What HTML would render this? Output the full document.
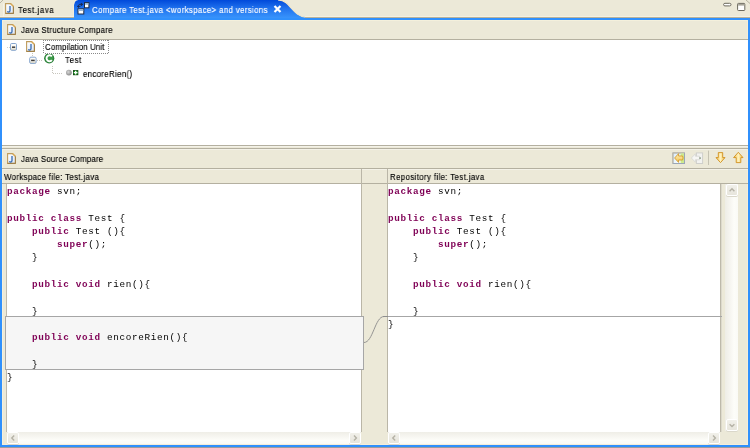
<!DOCTYPE html>
<html><head><meta charset="utf-8">
<style>
*{margin:0;padding:0;box-sizing:border-box}
html,body{width:750px;height:448px;overflow:hidden;background:#ECE9D8}
body{position:relative;-webkit-font-smoothing:antialiased;font-family:"Liberation Sans",sans-serif;font-size:8.6px;color:#000}
.a{position:absolute}
.t{position:absolute;white-space:pre;line-height:10px;will-change:transform;transform-origin:0 0;-webkit-text-stroke:0.15px currentColor}
.code{position:absolute;will-change:transform;font-family:"Liberation Mono",monospace;font-size:9.3px;letter-spacing:0.67px;line-height:13.28px;white-space:pre;color:#000}
.k{color:#7F0055;font-weight:bold}
.sb{position:absolute;width:12px;height:12px;background:linear-gradient(180deg,#F1F0EA,#E7E5DC);border:1px solid #FFFFFF;border-radius:2px;box-shadow:0 1px 0 #DAD7CA}
</style></head><body>

<!-- tab bar -->
<svg class="a" style="left:0;top:0" width="750" height="20">
  <defs>
    <linearGradient id="jf" x1="0" y1="0" x2="1" y2="1">
      <stop offset="0" stop-color="#FFFFFF"/><stop offset="1" stop-color="#DCE8FA"/>
    </linearGradient>
    <linearGradient id="tg" x1="0" y1="0" x2="0" y2="1">
      <stop offset="0" stop-color="#0049DA"/>
      <stop offset="0.45" stop-color="#2173EE"/>
      <stop offset="1" stop-color="#3A97FD"/>
    </linearGradient>
  </defs>
  <line x1="0" y1="3" x2="3" y2="0" stroke="#B8B4A2" stroke-width="1"/>
  <path d="M74,19 L74,5 Q74.5,0 78.5,0 L278,0 C285,0.5 288,4 291,8 C295,12.5 299,16.8 306,17.2 L306,19 Z" fill="url(#tg)"/>
  <path d="M278,0 C285,0.5 288,4 291,8 C295,12.5 299,16.8 306,17.2 L750,17.2" fill="none" stroke="#F2E6C8" stroke-width="1.1"/>
  <path d="M73.5,17 L73.5,5 Q74,0 78,-0.5" fill="none" stroke="#F4EEDB" stroke-width="1"/>
  <line x1="0" y1="17.5" x2="74" y2="17.5" stroke="#B9B29A" stroke-width="1"/><line x1="0" y1="16.5" x2="74" y2="16.5" stroke="#F4F1E2" stroke-width="1"/>
  <line x1="305" y1="17.5" x2="750" y2="17.5" stroke="#B9B29A" stroke-width="1"/><line x1="305" y1="16.5" x2="750" y2="16.5" stroke="#F4F1E2" stroke-width="1"/>
  <!-- min / max -->
  <rect x="723.6" y="3.3" width="7.4" height="2.6" rx="1.3" fill="#fff" stroke="#6B685C" stroke-width="1"/>
  <rect x="737.6" y="3.4" width="7.2" height="7.1" rx="0.8" fill="#fff" stroke="#6B685C" stroke-width="1"/>
  <rect x="738.1" y="3.9" width="6.2" height="1.7" fill="#A9A69A"/>
  <path d="M3.5,17 V3.5" fill="none" stroke="#F6F3E6" stroke-width="1"/>
  <line x1="746" y1="0" x2="750" y2="3.5" stroke="#B8B4A2" stroke-width="1"/>
</svg>
<!-- tab icons -->
<svg class="a" style="left:4.5px;top:3px" width="9" height="11" viewBox="0 0 9 11">
  <path d="M0.6,0.6 H5.6 L8.4,3.4 V10.4 H0.6 Z" fill="url(#jf)" stroke="#BE9B5C" stroke-width="1.1"/>
  <path d="M0.6,10.4 H8.4 V3.4" fill="none" stroke="#9C7E48" stroke-width="1"/>
  <path d="M5.6,0.6 L8.4,3.4" stroke="#D9A850" stroke-width="1.3"/>
  <path d="M5,2.9 V7.6 Q5,9.1 3.6,9.1 Q2.8,9.1 2.4,8.3" fill="none" stroke="#3C6FB4" stroke-width="1.35"/>
</svg>
<div class="t" style="left:17.9px;top:4.5px;font-size:9.4px;transform:scaleX(0.84);letter-spacing:0.69px">Test.java</div>

<svg class="a" style="left:77px;top:2px" width="13" height="13" viewBox="0 0 13 13">
  <rect x="7.5" y="0.6" width="4.4" height="5.2" fill="#FFFFFF" stroke="#1E2A44" stroke-width="1"/>
  <rect x="8" y="1.1" width="3.4" height="1.6" fill="#8FB0D0"/>
  <rect x="1" y="6.8" width="5.8" height="5.2" fill="#FFFFFF" stroke="#1E2A44" stroke-width="1"/>
  <rect x="1.5" y="7.3" width="4.8" height="1.6" fill="#8FB0D0"/>
  <path d="M1.8,2.4 H5 M4.2,1.2 L5.8,2.4 L4.2,3.6 Z" fill="#1A2A55" stroke="#1A2A55" stroke-width="0.9"/>
  <path d="M3.4,4.4 H0.8 M1.6,3.4 L0.3,4.4 L1.6,5.4 Z" fill="#1A2A55" stroke="#1A2A55" stroke-width="0.9"/>
</svg>
<div class="t" style="left:92.2px;top:4.5px;font-size:9.4px;transform:scaleX(0.84);letter-spacing:0.41px;color:#fff">Compare Test.java &lt;workspace&gt; and versions</div>
<svg class="a" style="left:273px;top:5px" width="9" height="8" viewBox="0 0 9 8">
  <path d="M1.5,1 L7.5,7 M7.5,1 L1.5,7" stroke="#fff" stroke-width="2.2"/>
</svg>

<!-- blue frame -->
<div class="a" style="left:0;top:18px;width:750px;height:429px;border:2px solid #3090FC"></div>
<div class="a" style="left:2px;top:20px;width:746px;height:1px;background:#F4F0DC"></div>
<div class="a" style="left:2px;top:20px;width:1px;height:425px;background:#F4F0DC"></div>
<div class="a" style="left:747px;top:20px;width:1px;height:425px;background:#F4EEDA"></div>
<div class="a" style="left:2px;top:444px;width:746px;height:1px;background:#F4EEDA"></div>
<div class="a" style="left:0;top:447px;width:750px;height:1px;background:#9C9C9C"></div>

<!-- structure header -->
<div class="a" style="left:2px;top:39px;width:746px;height:1px;background:#B4B0A0"></div>
<svg class="a" style="left:7px;top:24px" width="9" height="11" viewBox="0 0 9 11">
  <path d="M0.6,0.6 H5.6 L8.4,3.4 V10.4 H0.6 Z" fill="url(#jf)" stroke="#BE9B5C" stroke-width="1.1"/>
  <path d="M0.6,10.4 H8.4 V3.4" fill="none" stroke="#9C7E48" stroke-width="1"/>
  <path d="M5.6,0.6 L8.4,3.4" stroke="#D9A850" stroke-width="1.3"/>
  <path d="M5,2.9 V7.6 Q5,9.1 3.6,9.1 Q2.8,9.1 2.4,8.3" fill="none" stroke="#3C6FB4" stroke-width="1.35"/>
</svg>
<div class="t" style="left:20.9px;top:25px;font-size:9.4px;transform:scaleX(0.84);letter-spacing:0.35px">Java Structure Compare</div>

<!-- tree white area -->
<div class="a" style="left:2px;top:40px;width:746px;height:105px;background:#fff"></div>
<div class="a" style="left:2px;top:145px;width:746px;height:1px;background:#B4B0A0"></div>
<div class="a" style="left:2px;top:148px;width:746px;height:1px;background:#B4B0A0"></div>
<div class="a" style="left:2px;top:146px;width:746px;height:1px;background:#F4F2E8"></div>
<div class="a" style="left:2px;top:149px;width:746px;height:1px;background:#F4F2E8"></div>
<div class="a" style="left:2px;top:169px;width:746px;height:1px;background:#F4F2E8"></div>

<!-- tree contents -->
<svg class="a" style="left:26px;top:41px" width="9" height="11" viewBox="0 0 9 11">
  <path d="M0.6,0.6 H5.6 L8.4,3.4 V10.4 H0.6 Z" fill="url(#jf)" stroke="#BE9B5C" stroke-width="1.1"/>
  <path d="M0.6,10.4 H8.4 V3.4" fill="none" stroke="#9C7E48" stroke-width="1"/>
  <path d="M5.6,0.6 L8.4,3.4" stroke="#D9A850" stroke-width="1.3"/>
  <path d="M5,2.9 V7.6 Q5,9.1 3.6,9.1 Q2.8,9.1 2.4,8.3" fill="none" stroke="#3C6FB4" stroke-width="1.35"/>
</svg>
<svg class="a" style="left:0;top:40px" width="140" height="40">
  <defs>
    <linearGradient id="ex" x1="0" y1="0" x2="0" y2="1">
      <stop offset="0" stop-color="#FFFFFF"/><stop offset="0.5" stop-color="#F8F6F0"/><stop offset="1" stop-color="#DCD5C0"/>
    </linearGradient>
    <radialGradient id="sph" cx="0.4" cy="0.4" r="0.6">
      <stop offset="0" stop-color="#D8D8D8"/><stop offset="1" stop-color="#8A8A8A"/>
    </radialGradient>
  </defs>
  <!-- dotted lines -->
  <line x1="7" y1="7.5" x2="10" y2="7.5" stroke="#D2D0C8" stroke-dasharray="1,1"/>
  <line x1="32.5" y1="13" x2="32.5" y2="17" stroke="#C8C6BE" stroke-dasharray="1,1"/>
  <line x1="37" y1="20.5" x2="43" y2="20.5" stroke="#C8C6BE" stroke-dasharray="1,1"/>
  <line x1="52.5" y1="26" x2="52.5" y2="34" stroke="#C8C6BE" stroke-dasharray="1,1"/>
  <line x1="53" y1="33.5" x2="62" y2="33.5" stroke="#C8C6BE" stroke-dasharray="1,1"/>
  <!-- expander 1 -->
  <rect x="10.5" y="3.5" width="6" height="6.8" rx="1.2" fill="url(#ex)" stroke="#86A6CF" stroke-width="1"/>
  <line x1="12" y1="7.2" x2="15.2" y2="7.2" stroke="#3C3C3C" stroke-width="1.5"/>
  <!-- expander 2 -->
  <rect x="29.7" y="17.2" width="6.4" height="6.2" rx="1.2" fill="url(#ex)" stroke="#86A6CF" stroke-width="1"/>
  <line x1="31.1" y1="20.4" x2="34.7" y2="20.4" stroke="#3C3C3C" stroke-width="1.5"/>
  <!-- C icon -->
  <circle cx="49.2" cy="18.3" r="5.1" fill="#2A7D38"/>
  <circle cx="49.2" cy="18.3" r="4.1" fill="#3B9A48"/>
  <path d="M51.9,16.4 A3,3 0 1 0 51.9,20.2" fill="none" stroke="#fff" stroke-width="1.9"/>
  <!-- row3 icons -->
  <circle cx="68.9" cy="32.6" r="2.9" fill="url(#sph)"/>
  <rect x="73" y="30.1" width="5.3" height="5.1" fill="#0E3E10"/>
  <rect x="73.8" y="30.9" width="3.7" height="3.5" fill="#21A52A"/>
  <path d="M75.65,30.8 V34.5 M73.8,32.65 H77.5" stroke="#fff" stroke-width="1.2"/>
</svg>
<div class="a" style="left:43px;top:40px;width:66px;height:1px;background:repeating-linear-gradient(90deg,#8A8A8A 0 1px,#fff 1px 2px)"></div>
<div class="a" style="left:43px;top:53px;width:66px;height:1px;background:repeating-linear-gradient(90deg,#8A8A8A 0 1px,#fff 1px 2px)"></div>
<div class="a" style="left:43px;top:40px;width:1px;height:14px;background:repeating-linear-gradient(180deg,#8A8A8A 0 1px,#fff 1px 2px)"></div>
<div class="a" style="left:108px;top:40px;width:1px;height:14px;background:repeating-linear-gradient(180deg,#8A8A8A 0 1px,#fff 1px 2px)"></div>
<div class="t" style="left:45px;top:42.4px;font-size:9.4px;transform:scaleX(0.84);letter-spacing:0.13px">Compilation Unit</div>
<div class="t" style="left:64.7px;top:55.2px;font-size:9.4px;transform:scaleX(0.84);letter-spacing:0.74px">Test</div>
<div class="t" style="left:83.3px;top:68.8px;font-size:9.4px;transform:scaleX(0.84);letter-spacing:0.38px">encoreRien()</div>

<!-- source header -->
<div class="a" style="left:2px;top:168px;width:746px;height:1px;background:#B4B0A0"></div>
<svg class="a" style="left:7px;top:153px" width="9" height="11" viewBox="0 0 9 11">
  <path d="M0.6,0.6 H5.6 L8.4,3.4 V10.4 H0.6 Z" fill="url(#jf)" stroke="#BE9B5C" stroke-width="1.1"/>
  <path d="M0.6,10.4 H8.4 V3.4" fill="none" stroke="#9C7E48" stroke-width="1"/>
  <path d="M5.6,0.6 L8.4,3.4" stroke="#D9A850" stroke-width="1.3"/>
  <path d="M5,2.9 V7.6 Q5,9.1 3.6,9.1 Q2.8,9.1 2.4,8.3" fill="none" stroke="#3C6FB4" stroke-width="1.35"/>
</svg>
<div class="t" style="left:21px;top:154.3px;font-size:9.4px;transform:scaleX(0.84);letter-spacing:0.25px">Java Source Compare</div>

<!-- toolbar icons -->
<svg class="a" style="left:670px;top:150px" width="78" height="18">
  <defs>
    <linearGradient id="ag" x1="0" y1="0" x2="1" y2="0">
      <stop offset="0" stop-color="#F3C24C"/><stop offset="0.5" stop-color="#FFF2BE"/><stop offset="1" stop-color="#F3C24C"/>
    </linearGradient>
    <linearGradient id="ag2" x1="0" y1="0" x2="0" y2="1">
      <stop offset="0" stop-color="#FFF2BE"/><stop offset="1" stop-color="#F3C24C"/>
    </linearGradient>
    <linearGradient id="bx" x1="0" y1="0" x2="1" y2="1">
      <stop offset="0" stop-color="#D8ECFC"/><stop offset="1" stop-color="#FFFFFF"/>
    </linearGradient>
  </defs>
  <rect x="2.9" y="2.9" width="11.6" height="10.6" fill="url(#bx)" stroke="#9AA6B6" stroke-width="1"/>
  <path d="M2.9,13.5 V2.9 H14.5" fill="none" stroke="#C2B9A2" stroke-width="1"/>
  <rect x="10.6" y="3.4" width="3.4" height="9.6" fill="#CDEA8C"/>
  <path d="M4.6,8 L8.6,3.6 V6 H12.6 Q13.6,8 12.6,10 H8.6 V12.4 Z" fill="url(#ag2)" stroke="#D59A2A" stroke-width="0.9"/>
  <rect x="26.4" y="2.9" width="6.2" height="10.6" fill="#F2F2F0" stroke="#CFCFCB" stroke-width="1"/>
  <path d="M21.4,8 L25.4,3.8 V6.2 H29.5 V9.8 H25.4 V12.2 Z" fill="#F6F6F4" stroke="#D8D8D4" stroke-width="0.9"/>
  <rect x="29.3" y="7.3" width="1.6" height="1.6" fill="#8FA08A"/>
  <line x1="38.5" y1="0.6" x2="38.5" y2="15" stroke="#C5C2B2" stroke-width="1"/>
  <path d="M48.3,2.6 H52.7 V7.6 H55 L50.5,12.6 L46,7.6 H48.3 Z" fill="url(#ag)" stroke="#D0901E" stroke-width="0.9" stroke-linejoin="round"/>
  <path d="M68.3,2.3 L73,7.6 H70.8 V12.6 H66.2 V7.6 H63.6 Z" fill="url(#ag)" stroke="#D0901E" stroke-width="0.9" stroke-linejoin="round"/>
</svg>

<!-- column headers -->
<div class="a" style="left:2px;top:183px;width:746px;height:1px;background:#B4B0A0"></div>
<div class="a" style="left:361px;top:169px;width:1px;height:263px;background:#BAB6A7"></div>
<div class="a" style="left:387px;top:169px;width:1px;height:263px;background:#BAB6A7"></div>
<div class="t" style="left:4.4px;top:172px;font-size:9.4px;transform:scaleX(0.84);letter-spacing:0.40px">Workspace file: Test.java</div>
<div class="t" style="left:390.1px;top:172px;font-size:9.4px;transform:scaleX(0.84);letter-spacing:0.43px">Repository file: Test.java</div>

<!-- left code pane -->
<div class="a" style="left:6px;top:184px;width:1px;height:248px;background:#BDB9AA"></div>
<div class="a" style="left:7px;top:184px;width:354px;height:248px;background:#fff"></div>
<!-- right code pane -->
<div class="a" style="left:388px;top:184px;width:332px;height:248px;background:#fff"></div>
<div class="a" style="left:720px;top:184px;width:1px;height:248px;background:#BDB9AA"></div><div class="a" style="left:721px;top:184px;width:1px;height:248px;background:#DCD9CC"></div>

<!-- diff block left -->
<div class="a" style="left:5px;top:316px;width:359px;height:54px;background:#F6F6F6;border:1px solid #A6A6A6"></div>
<div class="a" style="left:383px;top:316px;width:339px;height:1px;background:#A6A6A6"></div>
<svg class="a" style="left:362px;top:300px" width="26" height="50">
  <path d="M2,42.5 C11,42.5 13,16.5 22,16.5 L26,16.5" fill="none" stroke="#8A8A8A" stroke-width="0.9"/>
</svg>

<div class="code" style="left:7px;top:185px"><span class="k">package</span> svn;

<span class="k">public</span> <span class="k">class</span> Test {
    <span class="k">public</span> Test (){
        <span class="k">super</span>();
    }

    <span class="k">public</span> <span class="k">void</span> rien(){

    }

    <span class="k">public</span> <span class="k">void</span> encoreRien(){

    }
}</div>

<div class="code" style="left:388px;top:185px"><span class="k">package</span> svn;

<span class="k">public</span> <span class="k">class</span> Test {
    <span class="k">public</span> Test (){
        <span class="k">super</span>();
    }

    <span class="k">public</span> <span class="k">void</span> rien(){

    }
}</div>

<!-- vertical scrollbar right pane -->
<div class="a" style="left:725px;top:184px;width:13px;height:247px;background:linear-gradient(90deg,#EEEDE6,#F5F4EF 35%,#FDFDF9 70%,#FAFAF6)"></div>
<div class="sb" style="left:726px;top:184px;height:12px"></div>
<svg class="a" style="left:726px;top:184px" width="12" height="12"><path d="M3.6,7.2 L6,4.8 L8.4,7.2" fill="none" stroke="#B5B2A6" stroke-width="1.4"/></svg>
<div class="sb" style="left:726px;top:418.5px;height:12.5px"></div>
<svg class="a" style="left:726px;top:419px" width="12" height="12"><path d="M3.6,5.2 L6,7.6 L8.4,5.2" fill="none" stroke="#B5B2A6" stroke-width="1.4"/></svg>

<!-- horizontal scrollbars -->
<div class="a" style="left:7px;top:431.5px;width:354px;height:12.5px;background:linear-gradient(180deg,#EFEEE7,#F6F5F0 35%,#FDFDF9 70%,#FAFAF6)"></div>
<div class="sb" style="left:7px;top:432px"></div>
<svg class="a" style="left:7px;top:432px" width="12" height="12"><path d="M7.2,3.6 L4.8,6 L7.2,8.4" fill="none" stroke="#B5B2A6" stroke-width="1.4"/></svg>
<div class="sb" style="left:349px;top:432px"></div>
<svg class="a" style="left:349px;top:432px" width="12" height="12"><path d="M5,3.6 L7.4,6 L5,8.4" fill="none" stroke="#B5B2A6" stroke-width="1.4"/></svg>

<div class="a" style="left:388px;top:431.5px;width:332px;height:12.5px;background:linear-gradient(180deg,#EFEEE7,#F6F5F0 35%,#FDFDF9 70%,#FAFAF6)"></div>
<div class="sb" style="left:388px;top:432px"></div>
<svg class="a" style="left:388px;top:432px" width="12" height="12"><path d="M7.2,3.6 L4.8,6 L7.2,8.4" fill="none" stroke="#B5B2A6" stroke-width="1.4"/></svg>
<div class="sb" style="left:708px;top:432px"></div>
<svg class="a" style="left:708px;top:432px" width="12" height="12"><path d="M5,3.6 L7.4,6 L5,8.4" fill="none" stroke="#B5B2A6" stroke-width="1.4"/></svg>

</body></html>
